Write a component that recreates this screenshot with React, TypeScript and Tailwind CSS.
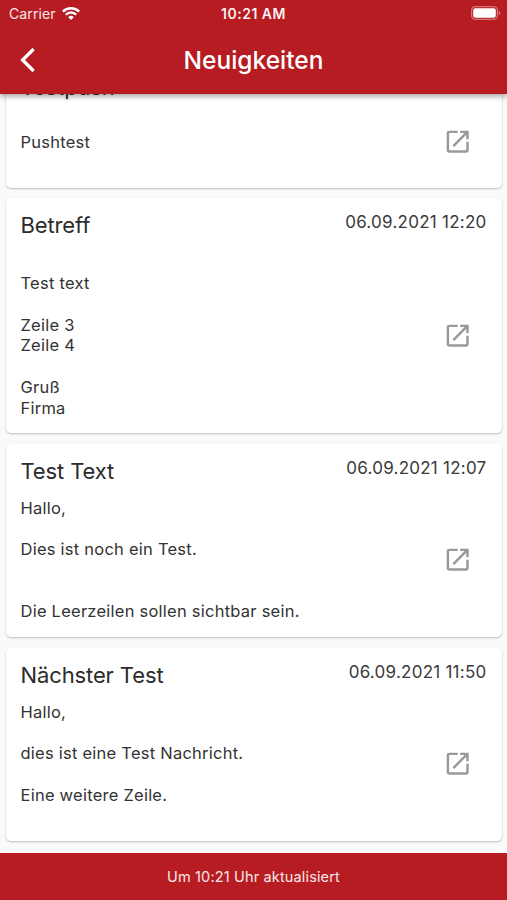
import clsx from "clsx";
import { MdOpenInNew } from "react-icons/md";

type NewsItem = {
  id: number;
  title: string;
  date: string;
  text: string;
  compact?: boolean;
};

const news: NewsItem[] = [
  {
    id: 1,
    title: "Testpush",
    date: "06.09.2021 12:21",
    text: "\nPushtest\n ",
    compact: true,
  },
  {
    id: 2,
    title: "Betreff",
    date: "06.09.2021 12:20",
    text: "\nTest text\n\nZeile 3\nZeile 4\n\nGruß\nFirma",
  },
  {
    id: 3,
    title: "Test Text",
    date: "06.09.2021 12:07",
    text: "Hallo,\n\nDies ist noch ein Test.\n\n\nDie Leerzeilen sollen sichtbar sein.",
  },
  {
    id: 4,
    title: "Nächster Test",
    date: "06.09.2021 11:50",
    text: "Hallo,\n\ndies ist eine Test Nachricht.\n\nEine weitere Zeile.\n ",
  },
];

function BackIcon() {
  return (
    <svg width="16" height="26" viewBox="0 0 16 26" fill="none">
      <path d="M13.6 2 2.6 13l11 11" stroke="#fff" strokeWidth="3.3" />
    </svg>
  );
}

function WifiIcon() {
  return (
    <svg width="18" height="13" viewBox="0 0 18 13" fill="none">
      <path d="M.9 4.6a11.5 11.5 0 0 1 16.2 0" stroke="#fff" strokeWidth="2.5" />
      <path d="M3.8 7.7a7.3 7.3 0 0 1 10.4 0" stroke="#fff" strokeWidth="2.3" />
      <path d="M9 13 6.2 10.2a4 4 0 0 1 5.6 0z" fill="#fff" />
    </svg>
  );
}

function BatteryIcon() {
  return (
    <svg width="30" height="14" viewBox="0 0 30 14" fill="none">
      <rect x="0.6" y="0.6" width="25.8" height="12.8" rx="3.6" stroke="#fff" strokeOpacity="0.4" strokeWidth="1.2" />
      <rect x="2.2" y="2.2" width="22.6" height="9.6" rx="2" fill="#fff" />
      <path d="M27.8 4.8c1.8.8 1.8 3.6 0 4.4z" fill="#fff" fillOpacity="0.5" />
    </svg>
  );
}

function NewsCard({ item }: { item: NewsItem }) {
  return (
    <article className="shrink-0 rounded-[5px] bg-white pb-[15px] pl-[15px] shadow-[0_1px_2px_rgba(0,0,0,0.25)]">
      <div
        className={clsx(
          "flex items-start justify-between pr-[15px]",
          item.compact ? "h-[51px]" : "h-[54px]"
        )}
      >
        <h2 className="pt-[14px] text-[22px] leading-[27px] tracking-[-0.12px] text-[#2b2b2b]">
          {item.title}
        </h2>
        <span className="pt-[14px] text-[17px] leading-[21px] tracking-[0.25px] text-[#3a3a3a]">
          {item.date}
        </span>
      </div>
      <div className="flex items-center justify-between pr-[29px]">
        <p className="whitespace-pre-wrap text-[16.5px] leading-[20.75px] tracking-[0.24px] text-[#333333]">
          {item.text}
        </p>
        <MdOpenInNew className="size-[29.4px] text-[#999999]" />
      </div>
    </article>
  );
}

export default function App() {
  return (
    <div className="flex h-[900px] w-[507px] flex-col overflow-hidden bg-[#fafafa] font-['Inter',sans-serif]">
      <header className="z-10 h-[94px] shrink-0 bg-[#b71c22] text-white shadow-[0_2px_6px_rgba(0,0,0,0.4)]">
        <div className="grid h-[26px] grid-cols-[1fr_80px_1fr] items-center text-[14px]">
          <div className="flex items-center gap-[6px] pl-[9px] tracking-[0.1px]">
            <span className="text-white/90">Carrier</span>
            <WifiIcon />
          </div>
          <span className="text-center font-semibold tracking-[0.5px] text-white/95">10:21 AM</span>
          <div className="flex justify-end pr-[6px]">
            <BatteryIcon />
          </div>
        </div>
        <div className="grid h-[68px] grid-cols-[60px_1fr_60px] items-center">
          <button className="pl-[20px]" aria-label="Zurück">
            <BackIcon />
          </button>
          <h1 className="text-center text-[24.5px] font-medium">Neuigkeiten</h1>
        </div>
      </header>

      <main className="flex min-h-0 flex-1 flex-col justify-end gap-[10.3px] px-[5.5px] pb-[12px]">
        {news.map((item) => (
          <NewsCard key={item.id} item={item} />
        ))}
      </main>

      <footer className="z-10 flex h-[47px] shrink-0 items-center justify-center bg-[#b71c22] pt-px text-[14.5px] tracking-[0.15px] text-white/90">
        Um 10:21 Uhr aktualisiert
      </footer>
    </div>
  );
}
